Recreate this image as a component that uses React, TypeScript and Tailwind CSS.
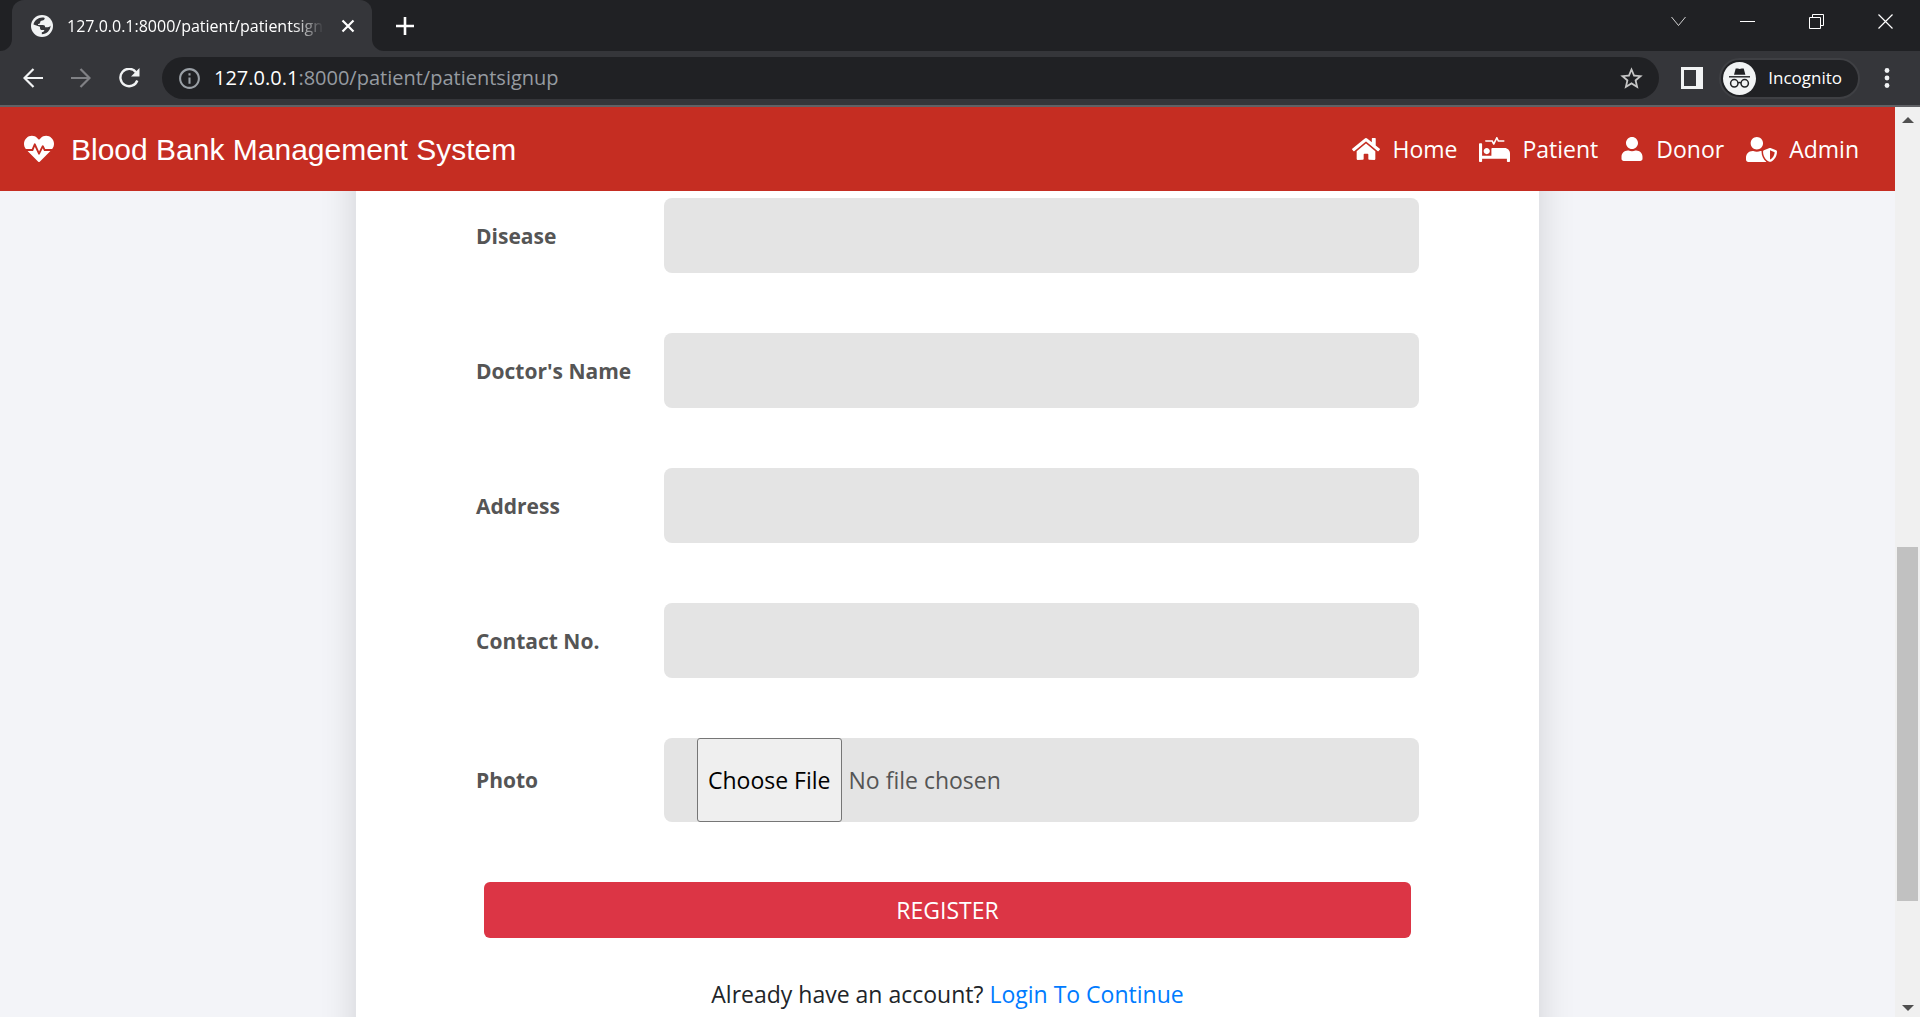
import type { ReactNode } from "react";
import { FaHeartbeat, FaHome, FaProcedures, FaUser, FaUserShield } from "react-icons/fa";
import { MdInfoOutline, MdStarOutline } from "react-icons/md";

const textFields = [
  { id: "disease", label: "Disease" },
  { id: "doctor", label: "Doctor's Name" },
  { id: "address", label: "Address" },
  { id: "contact", label: "Contact No." },
];

const navLinks = [
  { label: "Home", icon: <FaHome size={28} /> },
  { label: "Patient", icon: <FaProcedures size={31} /> },
  { label: "Donor", icon: <FaUser size={24} /> },
  { label: "Admin", icon: <FaUserShield size={31} /> },
];

function TabStrip() {
  return (
    <div className="flex h-[51px] justify-between bg-[#202124] text-white">
      <div className="flex">
        <div className="w-3 bg-[#35363a]">
          <div className="h-full rounded-br-xl bg-[#202124]" />
        </div>
        <div className="flex w-[360px] items-center rounded-t-xl bg-[#35363a] pl-[19px] pr-3">
          <svg width="22" height="22" viewBox="0 0 24 24" className="mr-3.5 shrink-0" aria-hidden="true">
            <circle cx="12" cy="12" r="12" fill="#f1f3f4" />
            <path
              d="M15 3.200C14.800 5 14 5.600 12.400 5.900c-1.800.3-2.400 1-2.400 2.300 0 1-.7 1.500-2 1.500-.5 0-.6.800 0 1.200h5c1.800 0 2.400 1 2.400 2.400h2.800c1.500 0 2.400-.7 3.200-1.800-.1 5.300-4.300 9.400-9.600 9.500v-2.300c1.700 0 2.700-.9 2.700-2.400h-2.300c-1.600 0-2.400-.8-2.400-2.200v-1.200L2.700 10.300C3.700 5.500 9.500 1.600 15 3.200z"
              fill="#35363a"
            />
          </svg>
          <span className="flex-1 overflow-hidden whitespace-nowrap text-[16px] [mask-image:linear-gradient(to_right,black_88%,transparent)]">
            127.0.0.1:8000/patient/patientsignup
          </span>
          <button aria-label="Close tab" className="ml-3 flex size-6 items-center justify-center">
            <svg width="14" height="14" viewBox="0 0 14 14" stroke="currentColor" strokeWidth="2.200">
              <path d="M1.500 1.500l11 11M12.500 1.500l-11 11" />
            </svg>
          </button>
        </div>
        <div className="w-3 bg-[#35363a]">
          <div className="h-full rounded-bl-xl bg-[#202124]" />
        </div>
        <button aria-label="New tab" className="ml-2 flex w-[26px] items-center justify-center">
          <svg width="18" height="18" viewBox="0 0 18 18" stroke="currentColor" strokeWidth="2.600">
            <path d="M9 0v18M0 9h18" />
          </svg>
        </button>
      </div>
      <div className="flex h-[43px] items-center">
        <WindowButton label="Search tabs">
          <path d="M0.500 3l7 8.500 7-8.500" strokeWidth="0.800" />
        </WindowButton>
        <WindowButton label="Minimize">
          <path d="M0 7.500h15" strokeWidth="1" />
        </WindowButton>
        <WindowButton label="Restore">
          <path d="M.5 3.500h11v11h-11zM3.500 3.500v-3h11v11h-3" strokeWidth="1" />
        </WindowButton>
        <WindowButton label="Close">
          <path d="M0.500 0.500l14 14M14.500 0.500l-14 14" />
        </WindowButton>
      </div>
    </div>
  );
}

function WindowButton({ label, children }: { label: string; children: ReactNode }) {
  return (
    <button aria-label={label} className="flex h-full w-[69px] items-center justify-center">
      <svg width="15" height="15" viewBox="0 0 15 15" fill="none" stroke="currentColor" strokeWidth="1.200">
        {children}
      </svg>
    </button>
  );
}

function Toolbar() {
  return (
    <div className="flex h-14 items-center border-b-2 border-[#606165] bg-[#35363a] text-white">
      <div className="flex w-[162px] gap-3 pl-[15px]">
        <button aria-label="Back" className="flex size-9 items-center justify-center">
          <svg width="20" height="20" viewBox="0 0 20 20" fill="none" stroke="#f1f3f4" strokeWidth="2.200">
            <path d="M20 10H2M10.500 1L1.500 10l9 9" />
          </svg>
        </button>
        <button aria-label="Forward" className="flex size-9 items-center justify-center">
          <svg width="20" height="20" viewBox="0 0 20 20" fill="none" stroke="#808185" strokeWidth="2.200">
            <path d="M0 10h18M9.500 1l9 9-9 9" />
          </svg>
        </button>
        <button aria-label="Reload" className="flex size-9 items-center justify-center">
          <svg width="21" height="20" viewBox="0 0 21 20" fill="none" stroke="#f1f3f4" strokeWidth="2.400">
            <path d="M17 4.200A8.700 8.700 0 1 0 18.300 12.500" />
            <path d="M20.500 0v8.500H12z" fill="#f1f3f4" stroke="none" />
          </svg>
        </button>
      </div>
      <div className="flex h-[42px] flex-1 items-center rounded-full bg-[#202124] pl-[15px] pr-3.5">
        <MdInfoOutline size={25} className="mr-3 text-[#9aa0a6]" />
        <div className="flex-1 text-[20px] text-[#969ba1]">
          <span className="text-white">127.0.0.1</span>:8000/patient/patientsignup
        </div>
        <button aria-label="Bookmark this page" className="text-[#c6c6c6]">
          <MdStarOutline size={27} />
        </button>
      </div>
      <button aria-label="Side panel" className="ml-[22px] flex h-[22px] w-[22px] border-[3px] border-r-[7px] border-[#f1f3f4]" />
      <button className="ml-4 flex h-[41px] items-center rounded-full border-2 border-[#3f4044] bg-[#202124] pl-0.5 pr-4 text-[17px]">
        <svg width="33" height="33" viewBox="0 0 33 33" className="mr-3" aria-hidden="true">
          <circle cx="16.500" cy="16.500" r="16.500" fill="#f1f3f4" />
          <path d="M12.700 6.500h2l2 .6 2-.6h2l1.700 6.200h-11.400z" fill="#202124" />
          <path d="M6 14.800h21" stroke="#202124" strokeWidth="1.400" />
          <g fill="none" stroke="#202124" strokeWidth="1.500">
            <circle cx="11.300" cy="21.300" r="3.700" />
            <circle cx="21.700" cy="21.300" r="3.700" />
            <path d="M15 21q1.500-1 3 0" />
          </g>
        </svg>
        Incognito
      </button>
      <button aria-label="Menu" className="ml-[15px] mr-[21px] flex w-6 justify-center">
        <svg width="6" height="20" viewBox="0 0 6 20" fill="#f1f3f4">
          <circle cx="3" cy="2.500" r="2.400" />
          <circle cx="3" cy="10" r="2.400" />
          <circle cx="3" cy="17.500" r="2.400" />
        </svg>
      </button>
    </div>
  );
}

function Scrollbar() {
  return (
    <div className="flex w-[25px] shrink-0 flex-col items-center justify-between bg-[#f0f0f0] pb-1.5 pt-2.5">
      <svg width="12" height="6" viewBox="0 0 12 6" fill="#505050" aria-hidden="true">
        <path d="M0 6l6-6 6 6z" />
      </svg>
      <div className="flex w-full flex-1 flex-col items-center">
        <div className="flex-[424]" />
        <div className="w-[21px] flex-[354] bg-[#c1c1c1]" />
        <div className="flex-[104]" />
      </div>
      <svg width="12" height="6" viewBox="0 0 12 6" fill="#505050" aria-hidden="true">
        <path d="M0 0l6 6 6-6z" />
      </svg>
    </div>
  );
}

export default function App() {
  return (
    <div className="flex h-screen flex-col overflow-hidden font-['Open_Sans',sans-serif]">
      <TabStrip />
      <Toolbar />
      <div className="flex min-h-0 flex-1">
        <div className="flex min-w-0 flex-1 flex-col bg-[#f3f4f8]">
          <header className="z-10 flex h-[84px] shrink-0 items-center justify-between bg-[#c52d22] pl-6 pr-9 text-white">
            <a href="#" className="flex items-center gap-[17px] font-['Liberation_Sans',sans-serif] text-[30px]">
              <FaHeartbeat size={30} />
              Blood Bank Management System
            </a>
            <nav className="flex gap-[22px] text-[23px]">
              {navLinks.map((link) => (
                <a key={link.label} href="#" className="flex items-center gap-3">
                  {link.icon}
                  {link.label}
                </a>
              ))}
            </nav>
          </header>
          <main className="flex min-h-0 flex-1 justify-center overflow-hidden">
            <form className="-my-20 w-full max-w-[1183px] bg-white px-[120px] pt-[87px] text-[23px] leading-8 shadow-[0_0_35px_rgba(0,0,0,0.14)]">
              {textFields.map((field) => (
                <div key={field.id} className="mb-[60px] flex items-center">
                  <label htmlFor={field.id} className="w-[188px] text-[21px] font-bold leading-[30px] text-[#555]">
                    {field.label}
                  </label>
                  <input id={field.id} type="text" className="h-[75px] flex-1 rounded-lg bg-[#e4e4e4] px-8" />
                </div>
              ))}
              <div className="mb-[60px] flex items-center">
                <label htmlFor="photo" className="w-[188px] text-[21px] font-bold leading-[30px] text-[#555]">
                  Photo
                </label>
                <input
                  id="photo"
                  type="file"
                  className="h-[84px] flex-1 rounded-lg bg-[#e4e4e4] pl-[33px] text-[#555] file:mr-[7px] file:h-[84px] file:rounded-[3px] file:border file:border-solid file:border-[#767676] file:bg-[#efefef] file:px-2.5 file:text-black"
                />
              </div>
              <div className="px-2">
                <button type="submit" className="h-14 w-full rounded-md bg-[#dc3545] text-white">
                  REGISTER
                </button>
              </div>
              <p className="mt-10 text-center text-[#212529]">
                Already have an account?{" "}
                <a href="#" className="text-[#007bff]">
                  Login To Continue
                </a>
              </p>
            </form>
          </main>
        </div>
        <Scrollbar />
      </div>
    </div>
  );
}
